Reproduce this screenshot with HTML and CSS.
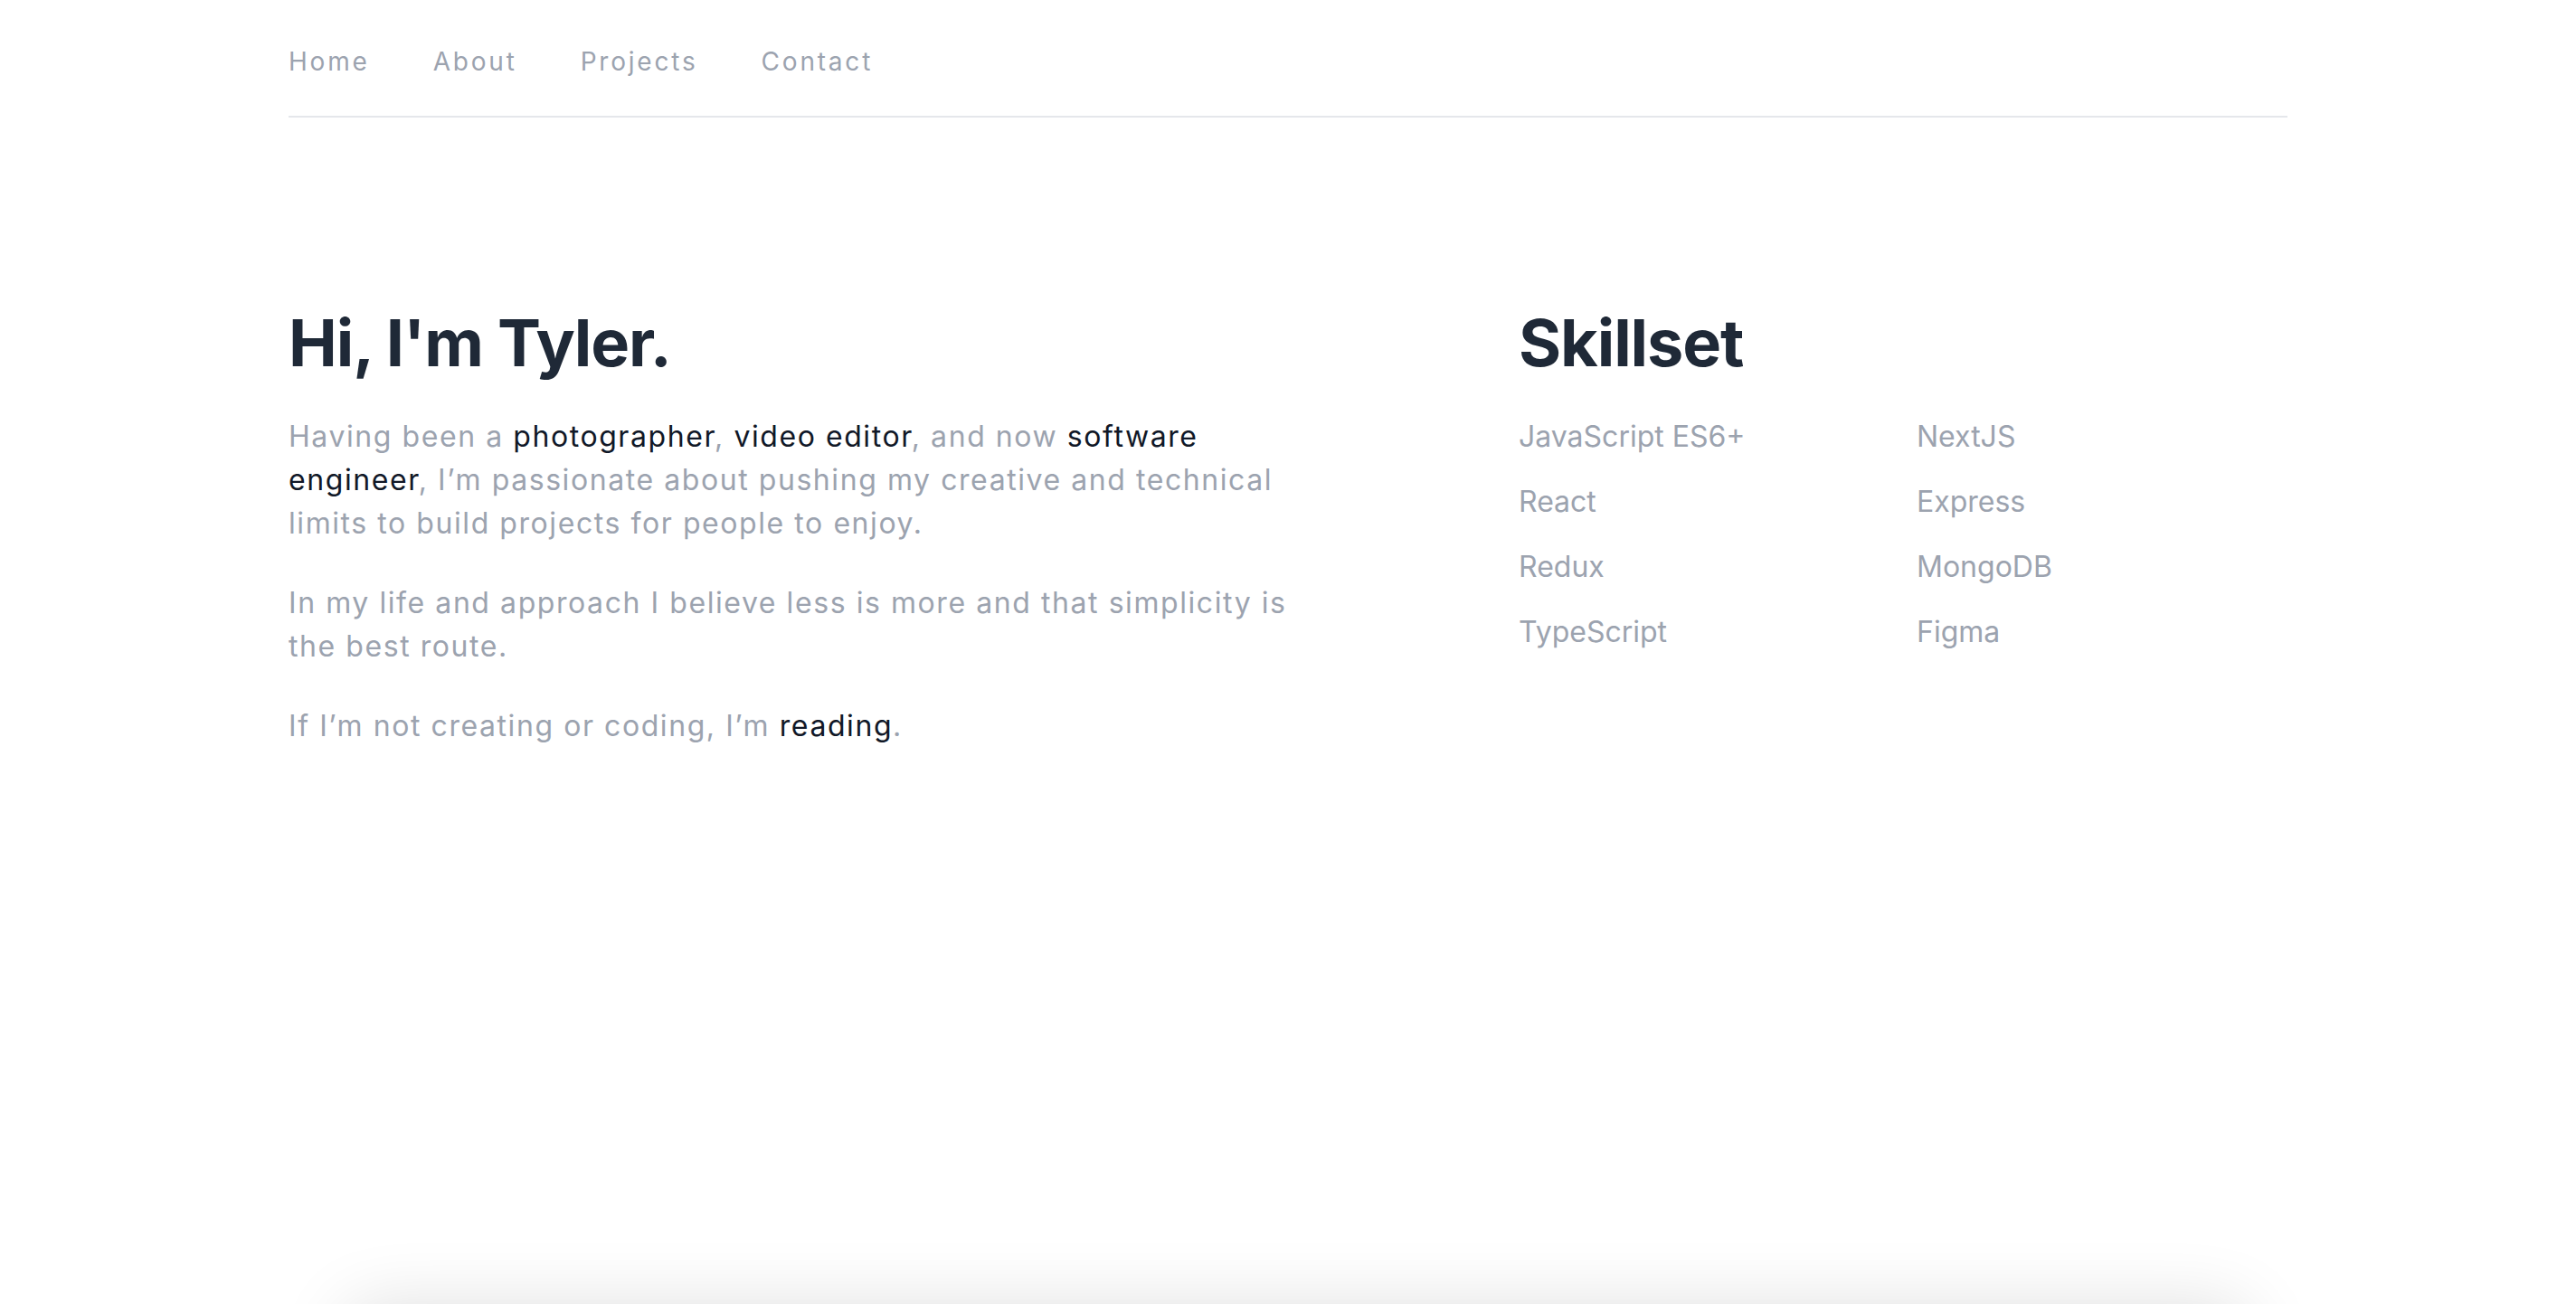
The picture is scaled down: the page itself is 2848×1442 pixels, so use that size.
FILE: index.html
```html
<!DOCTYPE html>
<html lang="en">
<head>
<meta charset="utf-8">
<title>Tyler</title>
<link rel="stylesheet" href="styles.css">
</head>
<body>
<div class="container">
  <nav class="nav">
    <a class="nav-link" href="#">Home</a>
    <a class="nav-link" href="#">About</a>
    <a class="nav-link" href="#">Projects</a>
    <a class="nav-link" href="#">Contact</a>
  </nav>
  <main class="hero">
    <section class="intro">
      <h1 class="title">Hi, I'm Tyler.</h1>
      <p class="text">Having been a <span class="em">photographer</span>, <span class="em">video editor</span>, and now <span class="em">software engineer</span>, I’m passionate about pushing my creative and technical limits to build projects for people to enjoy.</p>
      <p class="text">In my life and approach I believe less is more and that simplicity is the best route.</p>
      <p class="text">If I’m not creating or coding, I’m <span class="em">reading</span>.</p>
    </section>
    <section class="skills">
      <h2 class="title">Skillset</h2>
      <ul class="skill-list">
        <li>JavaScript ES6+</li>
        <li>NextJS</li>
        <li>React</li>
        <li>Express</li>
        <li>Redux</li>
        <li>MongoDB</li>
        <li>TypeScript</li>
        <li>Figma</li>
      </ul>
    </section>
  </main>
  <div class="card"></div>
</div>
</body>
</html>
```
FILE: styles.css
```css
html {
  overflow: hidden;
}
body {
  margin: 0;
  background: #ffffff;
  font-family: Inter, "Noto Sans", sans-serif;
  color: #9ca3af;
}
.container {
  width: 2210px;
  margin: 0 auto;
}
.nav {
  display: flex;
  gap: 70px;
  padding: 47px 0 39px;
  border-bottom: 2px solid #e5e7eb;
}
.nav-link {
  font-size: 28px;
  line-height: 42px;
  letter-spacing: 0.1em;
  color: #9ca3af;
  text-decoration: none;
}
.hero {
  display: grid;
  grid-template-columns: 1130px 1fr;
  column-gap: 230px;
  margin-top: 213px;
}
.title {
  margin: 0 0 44px;
  font-size: 72px;
  line-height: 72px;
  font-weight: 700;
  letter-spacing: -0.015em;
  color: #1f2937;
}
.text {
  margin: 0 0 40px;
  font-size: 32px;
  line-height: 48px;
  letter-spacing: 0.049em;
  color: #9ca3af;
}
.text:last-child {
  margin-bottom: 0;
}
.em {
  color: #111827;
}
.skill-list {
  list-style: none;
  margin: 0;
  padding: 0;
  display: grid;
  grid-template-columns: 440px 440px;
  row-gap: 24px;
  font-size: 32px;
  line-height: 48px;
  color: #9ca3af;
}
.card {
  margin: 620px 45px 0 65px;
  height: 300px;
  background: #ffffff;
  border-radius: 24px;
  box-shadow: 0 0 80px rgba(0, 0, 0, 0.14);
}
```
